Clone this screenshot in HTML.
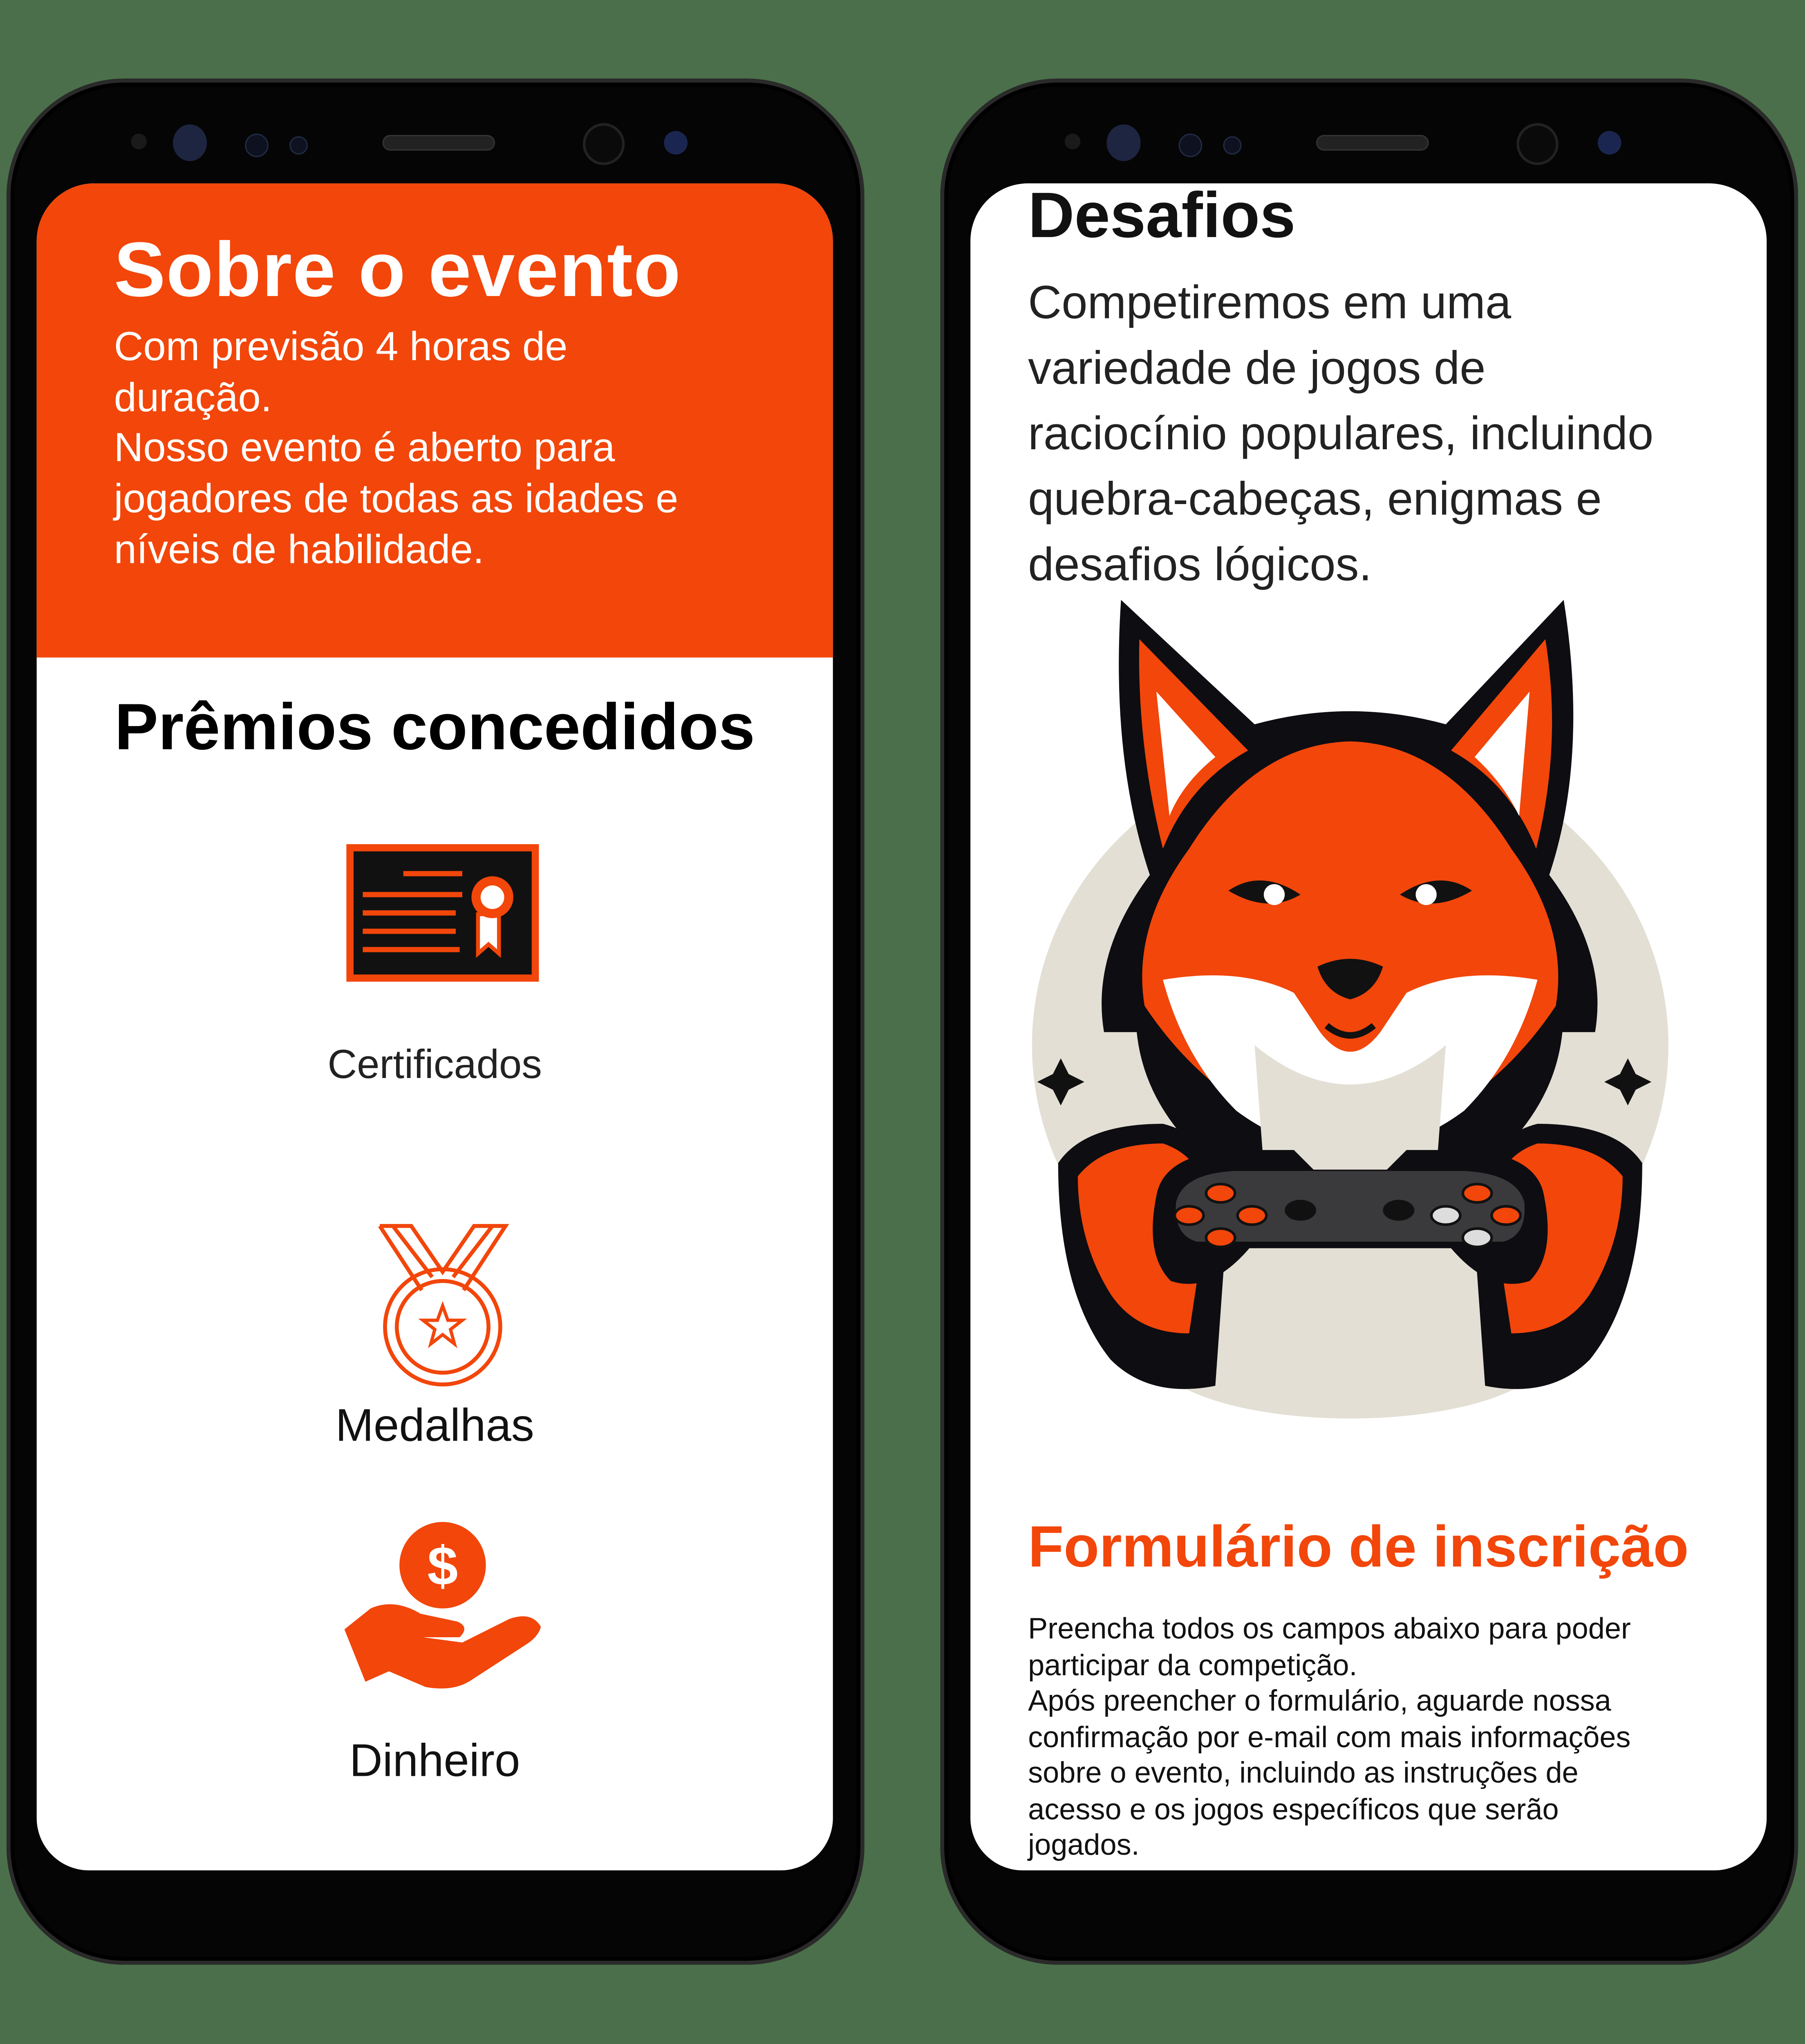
<!DOCTYPE html>
<html><head><meta charset="utf-8"><style>
html,body{margin:0;padding:0;width:4416px;height:5024px;overflow:hidden;background:#4b6f4a;}
#w{position:absolute;left:0;top:0;width:1378px;height:1568px;overflow:hidden;transform:scale(3.204);transform-origin:0 0;font-family:"Liberation Sans",sans-serif;background:#4b6f4a;}
.phone{position:absolute;top:60px;width:655px;height:1440px;background:#050505;border-radius:90px;box-shadow:inset 0 0 0 3px #2a2a2a,inset 0 0 0 6px #000;}
.screen{position:absolute;left:23px;top:80px;width:608px;height:1288px;background:#fff;border-radius:44px 44px 40px 40px;overflow:hidden;}
.cam{position:absolute;border-radius:50%;}
.spk{position:absolute;left:287px;top:43px;width:84px;height:10px;border-radius:6px;background:#222;border:1px solid #333;}
.t{position:absolute;white-space:nowrap;}
</style></head><body><div id="w">

<!-- LEFT PHONE -->
<div class="phone" style="left:5px;">
  <div class="cam" style="left:95px;top:42px;width:12px;height:12px;background:#1a1a1a"></div>
  <div class="cam" style="left:127px;top:35px;width:26px;height:28px;background:#1d2540"></div>
  <div class="cam" style="left:182px;top:42px;width:16px;height:16px;background:#0e1220;border:1px solid #222a44"></div>
  <div class="cam" style="left:216px;top:44px;width:12px;height:12px;background:#0e1220;border:1px solid #222a44"></div>
  <div class="spk"></div>
  <div class="cam" style="left:440px;top:34px;width:28px;height:28px;background:#0a0a0a;border:2px solid #222"></div>
  <div class="cam" style="left:502px;top:40px;width:18px;height:18px;background:#1b2650"></div>
  <div class="screen">
    <div style="position:absolute;left:0;top:0;width:608px;height:362px;background:#f2460a"></div>
    <div class="t" style="left:59px;top:32px;font-size:59px;font-weight:bold;color:#fff;letter-spacing:0.5px">Sobre o evento</div>
    <div class="t" style="left:59px;top:106px;font-size:31px;line-height:38.7px;color:#fff;">Com previsão 4 horas de<br>duração.<br>Nosso evento é aberto para<br>jogadores de todas as idades e<br>níveis de habilidade.</div>
    <div class="t" style="left:0;width:608px;text-align:center;top:386px;font-size:50px;font-weight:bold;color:#000">Prêmios concedidos</div>
    <svg style="position:absolute;left:235px;top:503px" width="150" height="108" viewBox="0 0 150 108">
      <rect x="1.5" y="1.5" width="147" height="105" fill="#f2460a"/>
      <rect x="7" y="7" width="136" height="94" fill="#111"/>
      <g stroke="#f2460a" stroke-width="4" fill="none">
        <line x1="45" y1="24" x2="90" y2="24"/><line x1="14" y1="40" x2="90" y2="40"/>
        <line x1="14" y1="54" x2="85" y2="54"/><line x1="14" y1="68" x2="85" y2="68"/><line x1="14" y1="82" x2="88" y2="82"/>
      </g>
      <path d="M102 55 L102 85 L110 78 L118 85 L118 55Z" fill="#fff" stroke="#f2460a" stroke-width="3"/>
      <circle cx="113" cy="42" r="16" fill="#f2460a"/><circle cx="113" cy="42" r="10" fill="#fff" stroke="#f2460a" stroke-width="2"/>
    </svg>
    <div class="t" style="left:0;width:608px;text-align:center;top:655px;font-size:31px;color:#222">Certificados</div>
    <svg style="position:absolute;left:256px;top:793px" width="108" height="130" viewBox="0 0 108 130">
      <g fill="none" stroke="#f2460a" stroke-width="3">
        <path d="M6 3 L30 3 L54 38 L78 3 L102 3 L70 52"/><path d="M6 3 L38 52"/><path d="M16 3 L46 42"/><path d="M92 3 L62 42"/>
        <circle cx="54" cy="80" r="44"/><circle cx="54" cy="80" r="35"/>
        <path d="M54 64 L58 75 L69 75 L60 82 L63 93 L54 86 L45 93 L48 82 L39 75 L50 75Z" stroke-width="2.5"/>
      </g>
    </svg>
    <div class="t" style="left:0;width:608px;text-align:center;top:929px;font-size:35px;color:#111">Medalhas</div>
    <svg style="position:absolute;left:233px;top:1018px" width="154" height="136" viewBox="0 0 154 136">
      <circle cx="77" cy="37" r="33" fill="#f2460a"/>
      <text x="77" y="52" text-anchor="middle" font-family="Liberation Sans" font-weight="bold" font-size="42" fill="#fff">$</text>
      <path d="M2 86 L22 70 Q40 62 60 74 L88 80 Q98 84 90 92 L62 92 L92 96 L128 78 Q145 72 152 84 Q150 92 140 98 L100 124 Q86 134 64 130 L36 118 L18 126 Z" fill="#f2460a"/>
    </svg>
    <div class="t" style="left:0;width:608px;text-align:center;top:1185px;font-size:35px;color:#111">Dinheiro</div>
  </div>
</div>

<!-- RIGHT PHONE -->
<div class="phone" style="left:718px;">
  <div class="cam" style="left:95px;top:42px;width:12px;height:12px;background:#1a1a1a"></div>
  <div class="cam" style="left:127px;top:35px;width:26px;height:28px;background:#1d2540"></div>
  <div class="cam" style="left:182px;top:42px;width:16px;height:16px;background:#0e1220;border:1px solid #222a44"></div>
  <div class="cam" style="left:216px;top:44px;width:12px;height:12px;background:#0e1220;border:1px solid #222a44"></div>
  <div class="spk"></div>
  <div class="cam" style="left:440px;top:34px;width:28px;height:28px;background:#0a0a0a;border:2px solid #222"></div>
  <div class="cam" style="left:502px;top:40px;width:18px;height:18px;background:#1b2650"></div>
  <div class="screen">
    <div class="t" style="left:44px;top:-3px;font-size:49px;font-weight:bold;color:#111">Desafios</div>
    <div class="t" style="left:44px;top:66px;font-size:35.5px;line-height:50px;color:#222">Competiremos em uma<br>variedade de jogos de<br>raciocínio populares, incluindo<br>quebra-cabeças, enigmas e<br>desafios lógicos.</div>
    <svg style="position:absolute;left:47px;top:318px" width="490" height="632" viewBox="0 0 490 632">
      <ellipse cx="243" cy="340" rx="243" ry="230" fill="#e3dfd4"/>
      <rect x="0" y="570" width="490" height="70" fill="#fff"/>
      <ellipse cx="243" cy="575" rx="150" ry="50" fill="#e3dfd4"/>
      <path d="M68 0 L170 95 Q243 75 316 95 L406 0 Q425 120 395 210 Q440 270 430 330 L405 330 Q400 380 360 420 Q330 450 300 440 L180 440 Q150 450 125 420 Q85 380 80 330 L55 330 Q45 270 90 210 Q60 120 68 0Z" fill="#0d0d12"/>
      <path d="M82 30 L165 115 Q120 140 100 190 Q80 110 82 30Z" fill="#f2460a"/>
      <path d="M392 30 L320 115 Q365 140 385 190 Q405 110 392 30Z" fill="#f2460a"/>
      <path d="M95 70 L140 120 Q115 140 105 165Z" fill="#fff"/>
      <path d="M380 70 L338 120 Q360 140 372 165Z" fill="#fff"/>
      <path d="M120 190 Q170 110 243 108 Q316 110 366 190 Q410 250 400 310 Q360 370 300 400 L243 420 L186 400 Q126 370 86 310 Q76 250 120 190Z" fill="#f2460a"/>
      <path d="M100 290 Q160 280 200 300 L220 330 Q243 360 266 330 L286 300 Q326 280 386 290 Q370 350 330 390 Q290 420 243 420 Q196 420 156 390 Q116 350 100 290Z" fill="#fff"/>
      <path d="M170 340 Q243 400 316 340 L310 420 Q243 460 176 420Z" fill="#e3dfd4"/>
      <path d="M150 222 Q175 205 205 225 Q180 240 150 222Z" fill="#111"/>
      <path d="M336 222 Q311 205 281 225 Q306 240 336 222Z" fill="#111"/>
      <circle cx="185" cy="225" r="8" fill="#fff"/><circle cx="301" cy="225" r="8" fill="#fff"/>
      <path d="M218 280 Q243 268 268 280 Q262 300 243 305 Q224 300 218 280Z" fill="#111"/>
      <path d="M225 325 Q243 340 261 325" stroke="#111" stroke-width="5" fill="none"/>
      <path d="M20 430 Q40 400 100 400 Q140 410 150 460 L140 600 Q90 610 60 580 Q20 530 20 430Z" fill="#0d0d12"/>
      <path d="M466 430 Q446 400 386 400 Q346 410 336 460 L346 600 Q396 610 426 580 Q466 530 466 430Z" fill="#0d0d12"/>
      <path d="M35 440 Q55 415 100 415 Q130 425 135 460 L120 560 Q80 560 60 530 Q35 490 35 440Z" fill="#f2460a"/>
      <path d="M451 440 Q431 415 386 415 Q356 425 351 460 L366 560 Q406 560 426 530 Q451 490 451 440Z" fill="#f2460a"/>
      <path d="M95 455 Q100 425 150 420 L200 420 L215 435 L271 435 L286 420 L336 420 Q386 425 391 455 Q400 500 380 520 Q350 530 320 495 L166 495 Q136 530 106 520 Q86 500 95 455Z" fill="#0d0d12"/>
      <path d="M110 460 Q115 438 155 436 L330 436 Q370 438 376 460 Q378 485 360 490 L126 490 Q108 485 110 460Z" fill="#3a3a3c"/>
      <g fill="#f2460a" stroke="#111" stroke-width="2">
        <ellipse cx="144" cy="453" rx="11" ry="7"/><ellipse cx="120" cy="470" rx="11" ry="7"/><ellipse cx="168" cy="470" rx="11" ry="7"/><ellipse cx="144" cy="487" rx="11" ry="7"/>
        <ellipse cx="340" cy="453" rx="11" ry="7"/><ellipse cx="362" cy="470" rx="11" ry="7"/>
      </g>
      <g fill="#ddd" stroke="#111" stroke-width="2"><ellipse cx="316" cy="470" rx="11" ry="7"/><ellipse cx="340" cy="487" rx="11" ry="7"/></g>
      <ellipse cx="205" cy="466" rx="12" ry="8" fill="#111"/><ellipse cx="280" cy="466" rx="12" ry="8" fill="#111"/>
      <path d="M22 350 L28 362 L40 368 L28 374 L22 386 L16 374 L4 368 L16 362Z" fill="#111"/>
      <path d="M455 350 L461 362 L473 368 L461 374 L455 386 L449 374 L437 368 L449 362Z" fill="#111"/>
    </svg>
    <div class="t" style="left:44px;top:1017px;font-size:44.5px;font-weight:bold;color:#f2460a">Formulário de inscrição</div>
    <div class="t" style="left:44px;top:1090px;font-size:22.5px;line-height:27.5px;color:#111">Preencha todos os campos abaixo para poder<br>participar da competição.<br>Após preencher o formulário, aguarde nossa<br>confirmação por e-mail com mais informações<br>sobre o evento, incluindo as instruções de<br>acesso e os jogos específicos que serão<br>jogados.</div>
  </div>
</div>

</div></body></html>
